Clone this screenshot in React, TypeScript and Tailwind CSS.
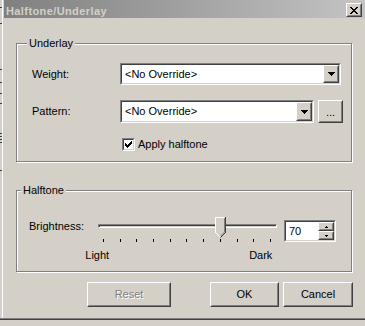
import React from "react";

function Pix({ rows, c = "#000" }: { rows: string[]; c?: string }) {
  const h = rows.length;
  const w = rows[0].length;
  return (
    <svg width={w} height={h} shapeRendering="crispEdges" className="block">
      {rows.flatMap((r, y) =>
        [...r].map((ch, x) =>
          ch === "X" ? <rect key={`${x}-${y}`} x={x} y={y} width={1} height={1} fill={c} /> : null
        )
      )}
    </svg>
  );
}

const CLOSE = ["XX....XX", ".XX..XX.", "..XXXX..", "...XX...", "..XXXX..", ".XX..XX.", "XX....XX"];
const CHECK = ["......X", ".....XX", "X...XXX", "XX.XXX.", "XXXXX..", ".XXX...", "..X...."];
const DOWN = ["XXXXXXX", ".XXXXX.", "..XXX..", "...X..."];
const SUP = [".X.", "XXX"];
const SDOWN = ["XXX", ".X."];

function Raised({ className = "", children }: { className?: string; children?: React.ReactNode }) {
  return (
    <div className={`border border-t-white border-l-white border-r-[#404040] border-b-[#404040] ${className}`}>
      <div className="w-full h-full border border-t-[#d4d0c8] border-l-[#d4d0c8] border-r-[#808080] border-b-[#808080] bg-[#d4d0c8] flex items-center justify-center">
        {children}
      </div>
    </div>
  );
}

function Sunken({ className = "", children }: { className?: string; children?: React.ReactNode }) {
  return (
    <div className={`border border-t-[#808080] border-l-[#808080] border-r-white border-b-white ${className}`}>
      <div className="w-full h-full border border-t-[#404040] border-l-[#404040] border-r-[#d4d0c8] border-b-[#d4d0c8] bg-white flex items-stretch">
        {children}
      </div>
    </div>
  );
}

function Combo({ w, h }: { w: string; h: string }) {
  return (
    <Sunken className={`${w} ${h}`}>
      <div className="flex-1 flex items-center pl-[3px]">&lt;No Override&gt;</div>
      <Raised className="w-[16px] h-full">
        <Pix rows={DOWN} />
      </Raised>
    </Sunken>
  );
}

function Thumb() {
  return (
    <svg width="11" height="21" className="block" shapeRendering="crispEdges">
      <polygon points="0,0 11,0 11,16 5.5,21 0,16" fill="#d4d0c8" />
      <path d="M0.5 16 V0.5 H10" stroke="#fff" fill="none" />
      <path d="M0.5 15.5 L5 20" stroke="#fff" fill="none" shapeRendering="auto" />
      <path d="M10.5 0 V15.5" stroke="#404040" fill="none" />
      <path d="M10.5 15.5 L5.5 20.5" stroke="#404040" fill="none" shapeRendering="auto" />
      <path d="M9.5 1 V15" stroke="#808080" fill="none" />
      <path d="M9.5 15 L5.5 19" stroke="#808080" fill="none" shapeRendering="auto" />
    </svg>
  );
}

function Mark() {
  return <div className="h-px w-[2px] bg-[#404040]" />;
}

export default function App() {
  return (
    <div className="w-[365px] h-[326px] bg-[#d4d0c8] flex flex-col overflow-hidden font-['Liberation_Sans',Arial,sans-serif] text-[11px] leading-[13px] text-black">
      <div className="h-[318px] flex">
        {/* left strip behind window */}
        <div className="w-[2px] flex flex-col bg-[#d4d0c8]">
          <div className="h-[7px]" />
          <Mark />
          <div className="h-[15px]" />
          <Mark />
          <div className="h-[45px]" />
          <Mark />
          <div className="h-[12px]" />
          <Mark />
          <div className="h-[10px]" />
          <Mark />
          <div className="h-[9px]" />
          <Mark />
          <div className="h-[29px]" />
          <Mark />
          <div className="h-[2px]" />
          <Mark />
          <div className="h-[2px]" />
          <Mark />
          <div className="h-[2px]" />
          <Mark />
          <div className="h-[27px]" />
          <Mark />
        </div>

        {/* window */}
        <div className="flex-1 flex flex-col border-l border-l-white">
          {/* title bar */}
          <div className="ml-[1px] h-[18px] flex items-start bg-linear-to-r from-[#808080] to-[#c4c4c4]">
            <div className="pl-[2px] pt-[5px] font-bold text-[#d4d0c8] tracking-[0.4px]">Halftone/Underlay</div>
            <Raised className="ml-auto mr-[3px] mt-[3px] w-[16px] h-[14px]">
              <Pix rows={CLOSE} />
            </Raised>
          </div>

          {/* Underlay group */}
          <div className="relative ml-[13px] mt-[25px] w-[336px] h-[119px] border border-[#808080] shadow-[inset_1px_1px_0_#fff,1px_1px_0_#fff]">
            <div className="absolute left-[10px] top-[-7px] px-[2px] bg-[#d4d0c8]">Underlay</div>
            <div className="pl-[15px] pt-[19px] flex flex-col">
              <div className="flex items-center">
                <div className="w-[88px]">Weight:</div>
                <Combo w="w-[221px]" h="h-[22px]" />
              </div>
              <div className="mt-[15px] flex items-center">
                <div className="w-[88px]">Pattern:</div>
                <Combo w="w-[194px]" h="h-[23px]" />
                <Raised className="ml-[4px] w-[25px] h-[23px]">
                  <span className="pt-[2px]">...</span>
                </Raised>
              </div>
              <div className="mt-[15px] ml-[90px] flex items-center gap-[3px]">
                <Sunken className="w-[13px] h-[13px]">
                  <div className="flex-1 flex items-center justify-center">
                    <Pix rows={CHECK} />
                  </div>
                </Sunken>
                <span>Apply halftone</span>
              </div>
            </div>
          </div>

          {/* Halftone group */}
          <div className="relative ml-[13px] mt-[28px] w-[336px] h-[82px] border border-[#808080] shadow-[inset_1px_1px_0_#fff,1px_1px_0_#fff]">
            <div className="absolute left-[4px] top-[-7px] px-[2px] bg-[#d4d0c8]">Halftone</div>
            <div className="pl-[12px] pt-[26px] flex items-start">
              <div className="w-[69px] mt-[3px]">Brightness:</div>
              <div className="relative w-[179px] flex flex-col">
                <div className="mt-[7px] h-[4px] border border-t-[#808080] border-l-[#808080] border-r-white border-b-white">
                  <div className="h-full border-t border-l border-t-[#404040] border-l-[#404040] bg-[#d4d0c8]" />
                </div>
                <div className="absolute left-[117px] top-0">
                  <Thumb />
                </div>
                <div className="mt-[11px] ml-[5px] w-[168px] h-[3px] flex justify-between">
                  {Array.from({ length: 11 }).map((_, i) => (
                    <div key={i} className="w-px h-full bg-black" />
                  ))}
                </div>
                <div className="mt-[7px] flex">
                  <div className="ml-[-17px] w-[40px] text-center">Light</div>
                  <div className="ml-[131px] w-[40px] text-center">Dark</div>
                </div>
              </div>
              <Sunken className="ml-[7px] mt-[3px] w-[52px] h-[22px]">
                <div className="flex-1 flex items-center pl-[3px]">70</div>
                <div className="w-[16px] flex flex-col">
                  <Raised className="h-[9px] w-full">
                    <Pix rows={SUP} />
                  </Raised>
                  <Raised className="h-[9px] w-full">
                    <Pix rows={SDOWN} />
                  </Raised>
                </div>
              </Sunken>
            </div>
          </div>

          {/* buttons */}
          <div className="mt-[10px] flex">
            <Raised className="ml-[84px] w-[84px] h-[25px]">
              <span className="text-[#808080] [text-shadow:1px_1px_0_#fff]">Reset</span>
            </Raised>
            <Raised className="ml-[39px] w-[69px] h-[25px]">
              <span>OK</span>
            </Raised>
            <Raised className="ml-[4px] w-[70px] h-[25px]">
              <span>Cancel</span>
            </Raised>
          </div>
        </div>
      </div>
      <div className="h-px bg-[#808080]" />
      <div className="h-px bg-[#404040]" />
    </div>
  );
}
